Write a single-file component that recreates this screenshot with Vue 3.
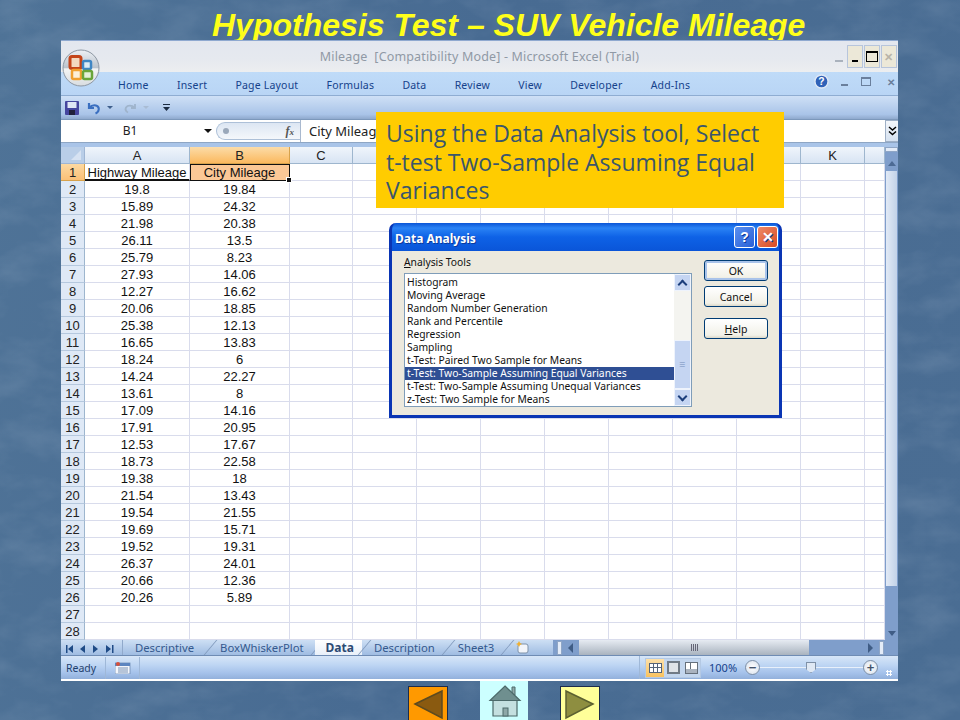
<script setup>
// D to J sit behind the yellow note on the slide, so their letters never show
const columns = ["A", "B", "C", "", "", "", "", "", "", "", "K", ""];
const ribbonTabs = ["Home", "Insert", "Page Layout", "Formulas", "Data", "Review", "View", "Developer", "Add-Ins"];
const sheetTabs = ["Descriptive", "BoxWhiskerPlot", "Data", "Description", "Sheet3"];

const mileage = [
  ["19.8", "19.84"], ["15.89", "24.32"], ["21.98", "20.38"], ["26.11", "13.5"], ["25.79", "8.23"],
  ["27.93", "14.06"], ["12.27", "16.62"], ["20.06", "18.85"], ["25.38", "12.13"], ["16.65", "13.83"],
  ["18.24", "6"], ["14.24", "22.27"], ["13.61", "8"], ["17.09", "14.16"], ["17.91", "20.95"],
  ["12.53", "17.67"], ["18.73", "22.58"], ["19.38", "18"], ["21.54", "13.43"], ["19.54", "21.55"],
  ["19.69", "15.71"], ["19.52", "19.31"], ["26.37", "24.01"], ["20.66", "12.36"], ["20.26", "5.89"],
  ["", ""], ["", ""],
];

const tools = [
  "Histogram",
  "Moving Average",
  "Random Number Generation",
  "Rank and Percentile",
  "Regression",
  "Sampling",
  "t-Test: Paired Two Sample for Means",
  "t-Test: Two-Sample Assuming Equal Variances",
  "t-Test: Two-Sample Assuming Unequal Variances",
  "z-Test: Two Sample for Means",
];
</script>

<template>
  <div class="slide">
    <svg class="texture" width="960" height="720">
      <filter id="mottle">
        <feTurbulence type="fractalNoise" baseFrequency="0.02 0.035" numOctaves="4" seed="11" />
        <feColorMatrix values="0 0 0 0 0.8  0 0 0 0 0.86  0 0 0 0 0.95  1.4 0 0 0 -0.55" />
      </filter>
      <rect width="960" height="720" filter="url(#mottle)" />
    </svg>

    <h1 class="title">Hypothesis Test – SUV Vehicle Mileage</h1>

    <div class="excel">
      <div class="titlebar">
        <span class="doc-title">Mileage&nbsp; [Compatibility Mode] - Microsoft Excel (Trial)</span>
        <svg class="office-button" width="38" height="38" viewBox="0 0 38 38">
          <defs>
            <linearGradient id="orb" x1="0" y1="0" x2="0" y2="1">
              <stop offset="0" stop-color="#eef1f5" />
              <stop offset=".5" stop-color="#b9c2cc" />
              <stop offset=".52" stop-color="#f4f5f4" />
              <stop offset="1" stop-color="#d8dce0" />
            </linearGradient>
          </defs>
          <circle cx="19" cy="19" r="18" fill="url(#orb)" stroke="#8d97a3" />
          <rect x="8" y="7.500" width="11" height="12" rx="2" fill="#f3d9c0" stroke="#c4451a" stroke-width="3" />
          <rect x="21" y="12" width="8" height="8" rx="1.500" fill="#dcebf6" stroke="#3f86c4" stroke-width="2.500" />
          <rect x="10" y="21" width="9" height="9" rx="1.500" fill="#fdf0d8" stroke="#f0a030" stroke-width="2.500" />
          <rect x="21" y="22" width="9" height="8" rx="1.500" fill="#e4f0d8" stroke="#6aa53a" stroke-width="2.500" />
        </svg>
        <div class="win-buttons">
          <span class="ghost-min"></span>
          <span class="win-btn"><i class="min-mark"></i></span>
          <span class="win-btn"><i class="max-mark"></i></span>
          <span class="win-btn close-mark">✕</span>
        </div>
      </div>

      <div class="ribbon">
        <span v-for="tab in ribbonTabs" :key="tab">{{ tab }}</span>
        <div class="ribbon-right">
          <svg class="rb-help" width="15" height="15" viewBox="0 0 16 16">
            <circle cx="8" cy="8" r="7" fill="#2f62b8" stroke="#dfe8f5" stroke-width="1.500" />
            <text x="8" y="12" text-anchor="middle" font-size="11" font-weight="700" fill="#fff" font-family="Liberation Sans">?</text>
          </svg>
          <i class="rb-min"></i>
          <i class="rb-restore"></i>
          <b>✕</b>
        </div>
      </div>

      <div class="qat">
        <svg width="14" height="14" viewBox="0 0 14 14">
          <rect width="14" height="14" rx="1" fill="#45459e" />
          <rect x="2.500" y="1" width="9" height="6" fill="#dfe6f4" />
          <rect x="4" y="9" width="6" height="5" fill="#20203a" />
        </svg>
        <svg class="undo" width="14" height="14" viewBox="0 0 14 14">
          <path d="M2 2v5h5M2.500 6.500C5 3.500 10 3.500 11.500 6.500c1 2.500-.5 5-3 6" fill="none" stroke="#3a6fc0" stroke-width="2.200" />
        </svg>
        <i class="caret"></i>
        <svg class="redo" width="14" height="14" viewBox="0 0 14 14">
          <path d="M12 3v4H8M11.500 6.500C9 4 4.500 4 3 6.500c-1 2 0 4 2 5" fill="none" stroke="#9fb4cc" stroke-width="1.800" />
        </svg>
        <i class="caret faint"></i>
        <svg class="customize" width="7" height="8" viewBox="0 0 7 8">
          <path d="M0 .5h7" stroke="#1b2b42" />
          <path d="M0 3h7L3.500 7z" fill="#1b2b42" />
        </svg>
      </div>

      <div class="formula-bar">
        <div class="name-box">B1</div>
        <i class="name-caret"></i>
        <div class="fx-pill">
          <i class="fx-dot"></i>
          <em>f<small>x</small></em>
        </div>
        <div class="formula-text">City Mileage</div>
        <div class="formula-expand">
          <svg width="9" height="10" viewBox="0 0 9 10" fill="none" stroke="#000" stroke-width="1.500">
            <path d="M1 1l3.500 3L8 1M1 5.500l3.500 3 3.500-3" />
          </svg>
        </div>
      </div>

      <div class="sheet-area">
        <div class="grid">
          <div class="corner"><i></i></div>
          <div
            v-for="(col, c) in columns"
            :key="c"
            class="col-head"
            :class="{ active: col === 'B' }"
          >{{ col }}</div>

          <div class="row-head active">1</div>
          <div class="cell head-a">Highway Mileage</div>
          <div class="cell head-b">City Mileage<i class="fill-handle"></i></div>
          <div v-for="n in 10" :key="'r1' + n" class="cell"></div>

          <template v-for="(row, i) in mileage" :key="i">
            <div class="row-head">{{ i + 2 }}</div>
            <div class="cell">{{ row[0] }}</div>
            <div class="cell">{{ row[1] }}</div>
            <div v-for="n in 10" :key="n" class="cell"></div>
          </template>
        </div>

        <div class="v-scroll">
          <i class="split-box"></i>
          <i class="arrow-up"></i>
          <div class="v-thumb"></div>
          <i class="arrow-down"></i>
        </div>
      </div>

      <div class="tabs-row">
        <div class="tab-nav">
          <svg width="52" height="10" viewBox="0 0 52 10" fill="#1f4b86">
            <path d="M1 1h1.500v8H1zM8 1v8L3 5zM20 1v8l-5-4zM28 1v8l5-4zM41 1v8l5-4zM47 1h1.500v8H47z" />
          </svg>
        </div>
        <div class="tabs">
          <span
            v-for="name in sheetTabs"
            :key="name"
            class="tab"
            :class="{ current: name === 'Data' }"
          >{{ name }}</span>
          <span class="new-sheet">
            <svg width="15" height="13" viewBox="0 0 15 13">
              <rect x="3" y="3" width="10" height="9" rx="2" fill="#f2f5fa" stroke="#7f93ab" />
              <path d="M4 0l1 2 2 1-2 1-1 2-1-2-2-1 2-1z" fill="#f0b030" />
            </svg>
          </span>
        </div>
        <div class="h-scroll">
          <i class="split-v"></i>
          <i class="arrow-left"></i>
          <div class="h-thumb"><i></i></div>
          <i class="arrow-right"></i>
          <i class="split-v"></i>
        </div>
      </div>

      <div class="statusbar">
        <span class="ready">Ready</span>
        <span class="macro">
          <svg width="16" height="12" viewBox="0 0 16 12">
            <rect y="1" width="15" height="11" fill="#f3f6fb" stroke="#6f8db5" stroke-width=".8" />
            <rect y="1" width="15" height="3" fill="#5c85c0" />
            <path d="M3 6h10M3 8h10M3 10h10" stroke="#7b93b5" />
            <circle cx="3" cy="2" r="2" fill="#d8503a" />
          </svg>
        </span>
        <div class="status-fill"></div>
        <div class="view-buttons">
          <span class="view on"><i class="v-grid"></i></span>
          <span class="view"><i class="v-page"></i></span>
          <span class="view"><i class="v-break"></i></span>
        </div>
        <span class="zoom-value">100%</span>
        <span class="zoom-btn">−</span>
        <div class="zoom-track"><i></i></div>
        <span class="zoom-btn">+</span>
        <span class="grip"></span>
      </div>
    </div>

    <div class="callout">Using the Data Analysis tool, Select t-test Two-Sample Assuming Equal Variances</div>

    <div class="dialog">
      <div class="dialog-title">
        <span>Data Analysis</span>
        <div class="dialog-btns">
          <span class="help-btn">?</span>
          <span class="close-btn">✕</span>
        </div>
      </div>
      <div class="dialog-body">
        <div class="tools-pane">
          <div class="tools-label"><u>A</u>nalysis Tools</div>
          <div class="listbox">
            <div class="list-items">
              <div
                v-for="tool in tools"
                :key="tool"
                class="list-item"
                :class="{ selected: tool.includes('Assuming Equal') }"
              >{{ tool }}</div>
            </div>
            <div class="list-scroll">
              <span class="sb-btn"><i class="chev-up"></i></span>
              <div class="sb-space"></div>
              <div class="sb-thumb">≡</div>
              <span class="sb-btn"><i class="chev-down"></i></span>
            </div>
          </div>
        </div>
        <div class="dialog-actions">
          <button class="default">OK</button>
          <button>Cancel</button>
          <button class="help"><u>H</u>elp</button>
        </div>
      </div>
    </div>

    <div class="nav-row">
      <div class="nav-btn prev">
        <svg width="38" height="35" viewBox="0 0 38 35">
          <path d="M6 17 33 4v27z" fill="#8a5a10" stroke="#5c4a20" stroke-width="1.500" />
        </svg>
      </div>
      <div class="nav-btn home">
        <svg width="46" height="39" viewBox="0 0 46 39">
          <path d="M12 19h24v16H12z" fill="#c4e0e0" stroke="#4c6a6a" stroke-width="1.200" />
          <path d="M31 6h3v8h-3z" fill="#8ea8a8" stroke="#4c6a6a" />
          <path d="M24 5 39 19.500H9z" fill="#6f8f8f" stroke="#4c6a6a" stroke-width="1.200" />
          <rect x="22" y="27" width="5" height="8" fill="#8ea8a8" stroke="#4c6a6a" />
        </svg>
      </div>
      <div class="nav-btn next">
        <svg width="38" height="35" viewBox="0 0 38 35">
          <path d="M32 17 5 4v27z" fill="#8e8e40" stroke="#5c6030" stroke-width="1.500" />
        </svg>
      </div>
    </div>
  </div>
</template>

<style>
html,
body {
  margin: 0;
  background: #4a6c92;
}
</style>

<style scoped>
.slide {
  position: relative;
  width: 960px;
  height: 720px;
  overflow: hidden;
  background: linear-gradient(100deg, #4f7397 0%, #486b92 45%, #4a6d93 100%);
  font-family: "Noto Sans", sans-serif;
}

.texture {
  position: absolute;
  left: 0;
  top: 0;
  opacity: 0.14;
}

.title {
  position: relative;
  margin: 0;
  height: 40px;
  padding-left: 212px;
  font: italic bold 32px/50px "Liberation Sans", sans-serif;
  color: #ffff1a;
  white-space: nowrap;
}

/* excel window */
.excel {
  position: relative;
  width: 837px;
  height: 641px;
  margin-left: 61px;
  background: #fff;
  display: flex;
  flex-direction: column;
  font-size: 10.500px;
  border-top: 1px solid #8fa9d0;
  box-sizing: border-box;
}

.titlebar {
  height: 31px;
  flex: none;
  background: linear-gradient(#e3e7ef, #e6e9ef 60%, #eceef0);
  position: relative;
  text-align: center;
  color: #9099a5;
  font-size: 12.500px;
  letter-spacing: 0.16px;
  line-height: 31px;
}

.office-button {
  position: absolute;
  left: 1px;
  top: 8px;
  z-index: 1;
}

.win-buttons {
  position: absolute;
  right: 1px;
  top: 4px;
  display: flex;
  height: 23px;
}

.ghost-min {
  width: 8px;
  height: 1.500px;
  margin: 15px 3px 0 0;
  background: #aab2bd;
}

.win-btn {
  width: 16px;
  margin-left: 1px;
  background: #ece8d8;
  border: 1px solid #b7c5dc;
  box-sizing: border-box;
  display: flex;
  align-items: center;
  justify-content: center;
  font-size: 11px;
}

.min-mark {
  width: 6px;
  height: 2px;
  background: #000;
  margin-top: 9px;
}

.max-mark {
  width: 10px;
  height: 8px;
  border: 1px solid #000;
  border-top-width: 2px;
}

.close-mark {
  color: #b8b4a8;
  font-weight: 700;
}

.ribbon {
  height: 24px;
  flex: none;
  background: linear-gradient(#bfdbf8, #b9d5f5);
  border-bottom: 1px solid #8fadd2;
  box-sizing: border-box;
  display: flex;
  align-items: center;
  padding: 2px 0 0 57px;
  gap: 28.200px;
  color: #15428b;
  font-size: 10.500px;
  letter-spacing: 0.2px;
  position: relative;
}

.ribbon-right {
  position: absolute;
  right: 3px;
  top: 2px;
  display: flex;
  align-items: center;
  gap: 13px;
}

.ribbon-right b {
  color: #6a7f9c;
  font-size: 10px;
}

.rb-help {
  margin-right: -1px;
}

.rb-min {
  width: 7px;
  height: 2px;
  margin-top: 6px;
  background: #6a7f9c;
}

.rb-restore {
  width: 8px;
  height: 6px;
  margin-right: 3px;
  border: 1px solid #6a7f9c;
  border-top-width: 2px;
}

.qat {
  height: 24px;
  flex: none;
  background: linear-gradient(#cfe0f6, #a9c4e8 80%, #8fa9cd);
  display: flex;
  align-items: center;
  padding-left: 4px;
  border-bottom: 1px solid #7c98bb;
  box-sizing: border-box;
}

.undo {
  margin-left: 8px;
}

.redo {
  margin-left: 10px;
}

.caret {
  width: 0;
  height: 0;
  margin-left: 6px;
  border: 3px solid transparent;
  border-top: 3px solid #3f5f8c;
  border-bottom: 0;
}

.caret.faint {
  border-top-color: #a9bcd4;
}

.customize {
  margin-left: 14px;
}

.formula-bar {
  height: 23px;
  flex: none;
  background: #fff;
  display: flex;
  align-items: stretch;
  border-bottom: 1px solid #8ea6c4;
  box-sizing: border-box;
  position: relative;
  font-size: 13px;
  color: #222;
}

.name-box {
  width: 138px;
  flex: none;
  text-align: center;
  line-height: 22px;
  font-size: 12px;
}

.name-caret {
  align-self: center;
  width: 0;
  height: 0;
  margin-left: 5px;
  border: 4px solid transparent;
  border-top: 4px solid #111;
  border-bottom: 0;
}

.fx-pill {
  width: 84px;
  flex: none;
  margin: 2px 0 2px 4px;
  border: 1px solid #adc0d8;
  border-right: 0;
  border-radius: 10px 0 0 10px;
  background: linear-gradient(#dce6f3, #f4f7fb);
  display: flex;
  align-items: center;
  justify-content: space-between;
  padding: 0 6px;
  box-sizing: border-box;
}

.fx-dot {
  width: 6px;
  height: 6px;
  border-radius: 50%;
  background: #9aa8ba;
}

.fx-pill em {
  font: italic bold 12px "Liberation Serif", serif;
  color: #555;
}

.fx-pill small {
  font-size: 9px;
}

.formula-text {
  flex: 1;
  border-left: 1px solid #a9b9cf;
  padding-left: 8px;
  line-height: 22px;
  white-space: nowrap;
  overflow: hidden;
}

.formula-expand {
  width: 12px;
  flex: none;
  border: 1px solid #9fb0c6;
  border-right: 0;
  display: flex;
  align-items: center;
  justify-content: center;
  background: linear-gradient(#f4f7fb, #d5e1f0);
}

.sheet-area {
  flex: none;
  height: 497px;
  display: flex;
  background: #a9c4e8;
  padding-top: 4px;
  box-sizing: border-box;
}

.grid {
  display: grid;
  grid-template-columns: 24px 105px 100px 63px repeat(8, 64px) 20px;
  grid-auto-rows: 17px;
  width: 824px;
  flex: none;
  background: #fff;
  font: 13px/17px "Liberation Sans", sans-serif;
  color: #111;
}

.corner {
  background: #b9cee8;
  border-right: 1px solid #9fb6d4;
  border-bottom: 1px solid #9fb6d4;
  box-sizing: border-box;
  position: relative;
}

.corner i {
  position: absolute;
  right: 3px;
  bottom: 3px;
  border: 5px solid transparent;
  border-right-color: #d6e2f2;
  border-bottom-color: #d6e2f2;
}

.col-head {
  background: linear-gradient(#f0f5fb, #d8e4f3);
  border-right: 1px solid #9eb6ce;
  border-bottom: 1px solid #9eb6ce;
  box-sizing: border-box;
  text-align: center;
  color: #222;
}

.col-head.active {
  background: linear-gradient(#fcdca8, #fbb95f);
  border-color: #d7a24c;
}

.row-head {
  background: #dfe9f6;
  border-right: 1px solid #9eb6ce;
  border-bottom: 1px solid #b5c8de;
  box-sizing: border-box;
  text-align: center;
  color: #222;
}

.row-head.active {
  background: linear-gradient(#fcd9a2, #fbc077);
  border-color: #d7a24c;
}

.cell {
  border-right: 1px solid #d9dcec;
  border-bottom: 1px solid #d9dcec;
  box-sizing: border-box;
  text-align: center;
  white-space: nowrap;
  overflow: hidden;
}

.head-a {
  border-bottom: 2px solid #111;
}

.head-b {
  position: relative;
  overflow: visible;
  background: #fbc896;
  border-color: #111;
  box-shadow: inset 1px 1px 0 #111;
}

.fill-handle {
  position: absolute;
  right: -3px;
  bottom: -3px;
  width: 4px;
  height: 4px;
  background: #111;
  border: 1px solid #fff;
}

.v-scroll {
  flex: 1;
  display: flex;
  flex-direction: column;
  align-items: center;
  background: #7f9ecb;
}

.split-box {
  width: 11px;
  height: 3px;
  background: #e4ecf8;
  border: 1px solid #8fa6c6;
}

.arrow-up {
  margin-top: 9px;
  border: 4px solid transparent;
  border-bottom: 5px solid #4c6a94;
  border-top: 0;
}

.v-thumb {
  width: 11px;
  height: 415px;
  margin-top: 5px;
  background: linear-gradient(90deg, #e2eaf6, #c2d2e8);
}

.arrow-down {
  margin-top: auto;
  margin-bottom: 4px;
  border: 4px solid transparent;
  border-top: 5px solid #3f5c85;
  border-bottom: 0;
}

.tabs-row {
  height: 16px;
  flex: none;
  display: flex;
  background: linear-gradient(#cddff4, #9fbce2);
  border-bottom: 1px solid #6f8cb4;
  box-sizing: border-box;
  font-size: 11.300px;
  line-height: 16px;
}

.tab-nav {
  width: 61px;
  flex: none;
  padding: 2px 0 0 4px;
  box-sizing: border-box;
}

.tabs {
  width: 431px;
  flex: none;
  display: flex;
  border-left: 1px solid #90a9cb;
  box-sizing: border-box;
}

.tab {
  position: relative;
  height: 15px;
  padding: 0 11px 0 12px;
  white-space: nowrap;
  color: #34598e;
}

.tab::after {
  content: "";
  position: absolute;
  right: -3px;
  top: 0;
  bottom: 0;
  border-right: 1px solid #7f98bb;
  transform: skewX(-40deg);
}

.tab:first-child {
  padding-right: 14px;
}

.tab.current {
  padding: 0 8px 0 11px;
  background: linear-gradient(#ffffff, #e9f0f9);
  color: #2d4a73;
  font-weight: 700;
  font-size: 12px;
}

.new-sheet {
  padding: 1px 0 0 10px;
}

.h-scroll {
  flex: 1;
  display: flex;
  align-items: center;
  background: #7f9ecb;
  padding: 0 14px 0 4px;
}

.split-v {
  width: 3px;
  height: 12px;
  background: #e4ecf8;
  border: 1px solid #8fa6c6;
  flex: none;
}

.arrow-left {
  flex: none;
  margin: 0 6px;
  border: 5px solid transparent;
  border-right: 5px solid #3f5c85;
  border-left: 0;
}

.arrow-right {
  flex: none;
  margin: 0 6px 0 auto;
  border: 5px solid transparent;
  border-left: 5px solid #3f5c85;
  border-right: 0;
}

.h-thumb {
  width: 230px;
  height: 15px;
  display: flex;
  align-items: center;
  justify-content: center;
  background: linear-gradient(#e6ebf2, #a9b3bf);
}

.h-thumb i {
  width: 7px;
  height: 7px;
  background: repeating-linear-gradient(90deg, #667 0 1px, transparent 1px 2px);
}

.statusbar {
  flex: none;
  height: 25px;
  box-sizing: border-box;
  display: flex;
  align-items: center;
  background: linear-gradient(#d7e6f8, #bdd5f3 40%, #a4c1ea 75%, #92b0db);
  color: #1f3f6e;
  font-size: 10.500px;
  border-bottom: 2px solid #fff;
}

.ready {
  width: 45px;
  flex: none;
  padding-left: 5px;
  box-sizing: border-box;
  border-right: 1px solid #9fb8d8;
  line-height: 22px;
}

.macro {
  width: 34px;
  height: 22px;
  flex: none;
  box-sizing: border-box;
  display: flex;
  align-items: center;
  justify-content: center;
  border-right: 1px solid #9fb8d8;
}

.status-fill {
  width: 500px;
  height: 23px;
  flex: none;
  border-right: 1px solid #9fb8d8;
  box-sizing: border-box;
}

.view-buttons {
  display: flex;
  flex: none;
  margin-left: 5px;
  height: 18px;
  border: 1px solid #b4c9e4;
  background: #c3d6ee;
}

.view {
  width: 18px;
  display: flex;
  align-items: center;
  justify-content: center;
}

.view.on {
  background: linear-gradient(#fde0a8, #f9c25f);
}

.v-grid {
  width: 11px;
  height: 8px;
  border: 1px solid #55647a;
  background:
    linear-gradient(90deg, transparent 3px, #55647a 3px, #55647a 4px, transparent 4px, transparent 7px, #55647a 7px, #55647a 8px, transparent 8px),
    linear-gradient(transparent 3px, #55647a 3px, #55647a 4px, transparent 4px),
    #fff;
}

.v-page {
  width: 9px;
  height: 9px;
  border: 2px solid #707a86;
  background: #dfe3e8;
}

.v-break {
  width: 11px;
  height: 10px;
  border: 1px solid #66707c;
  background:
    linear-gradient(90deg, #fff 4px, #66707c 4px, #66707c 5px, #fff 5px) 0 0 / 100% 6px no-repeat,
    #aab3bf;
}

.zoom-value {
  margin-left: 8px;
  flex: none;
  font-size: 11px;
  color: #15428b;
}

.zoom-btn {
  width: 15px;
  height: 15px;
  margin-left: 8px;
  flex: none;
  box-sizing: border-box;
  border: 1px solid #7d8fa6;
  border-radius: 50%;
  background: radial-gradient(#fff, #d5dfeb);
  text-align: center;
  font: bold 13px/13px "Liberation Sans", sans-serif;
  color: #44536a;
}

.zoom-track {
  width: 103px;
  height: 1px;
  flex: none;
  background: #e8f0fa;
  position: relative;
}

.zoom-track + .zoom-btn {
  margin-left: 0;
}

.zoom-track i {
  position: absolute;
  left: 46px;
  top: -5px;
  width: 8px;
  height: 9px;
  background: #dfe8f4;
  border: 1px solid #7d8fa6;
  clip-path: polygon(0 0, 100% 0, 100% 65%, 50% 100%, 0 65%);
}

.grip {
  width: 6px;
  height: 6px;
  flex: none;
  margin: 10px 0 0 8px;
  background: radial-gradient(circle, #fff 1px, transparent 1.300px) 0 0 / 3px 3px;
}

/* slide annotation */
.callout {
  position: absolute;
  left: 376px;
  top: 112px;
  width: 408px;
  height: 96px;
  box-sizing: border-box;
  padding: 7px 22px 0 10px;
  background: #ffcc00;
  color: #3a566c;
  font: 23px/28.500px "Open Sans", sans-serif;
}

/* data analysis dialog */
.dialog {
  position: absolute;
  left: 389px;
  top: 223px;
  width: 393px;
  height: 195px;
  box-sizing: border-box;
  display: flex;
  flex-direction: column;
  background: #0a5ae0;
  border: 3px solid #0a35b4;
  border-top: 0;
  border-radius: 7px 7px 0 0;
  font: 10.300px/13px "Noto Sans", sans-serif;
  color: #111;
}

.dialog-title {
  height: 28px;
  flex: none;
  display: flex;
  align-items: center;
  justify-content: space-between;
  padding: 0 1px 0 3px;
  border-radius: 7px 7px 0 0;
  background: linear-gradient(#0a55d6, #2a83f5 18%, #0e62e6 50%, #0a55d8);
  color: #fff;
  font: bold 12px "Noto Sans", sans-serif;
  text-shadow: 1px 1px 0 #0a3a9c;
}

.dialog-title > span {
  padding-top: 3px;
}

.dialog-btns {
  display: flex;
  gap: 2px;
}

.help-btn,
.close-btn {
  width: 19px;
  height: 20px;
  border: 1px solid #fff;
  border-radius: 3px;
  text-align: center;
  font: bold 14px/20px "Liberation Sans", sans-serif;
  color: #fff;
}

.help-btn {
  background: linear-gradient(135deg, #5a90f0, #2a5fd6);
}

.close-btn {
  background: linear-gradient(135deg, #ee8a6a, #d84a22);
}

.dialog-body {
  flex: 1;
  display: flex;
  background: #ece9de;
  padding: 5px 12px 8px;
}

.tools-pane {
  width: 288px;
  flex: none;
}

.tools-label {
  height: 13px;
}

.listbox {
  margin-top: 4px;
  width: 288px;
  height: 134px;
  box-sizing: border-box;
  display: flex;
  background: #fff;
  border: 1px solid #7f9db9;
}

.list-items {
  flex: 1;
  padding-top: 2px;
}

.list-item {
  height: 13px;
  padding-left: 2px;
  white-space: nowrap;
}

.list-item.selected {
  background: #2f4f94;
  color: #fff;
}

.list-scroll {
  width: 17px;
  flex: none;
  display: flex;
  flex-direction: column;
  background: #f4f4f0;
}

.sb-btn {
  height: 17px;
  flex: none;
  background: #c5d5f2;
  border: 1px solid #eef3fc;
  box-sizing: border-box;
  display: flex;
  align-items: center;
  justify-content: center;
}

.chev-up,
.chev-down {
  width: 5px;
  height: 5px;
  border-left: 2px solid #1c3f7c;
  border-top: 2px solid #1c3f7c;
  transform: rotate(45deg);
  margin-top: 3px;
}

.chev-down {
  transform: rotate(225deg);
  margin-top: -3px;
}

.sb-space {
  flex: 1;
}

.sb-thumb {
  height: 49px;
  flex: none;
  background: #c5d5f2;
  border: 1px solid #eef3fc;
  box-sizing: border-box;
  text-align: center;
  line-height: 47px;
  color: #8fa5cc;
}

.dialog-actions {
  margin-left: 12px;
  padding-top: 4px;
  display: flex;
  flex-direction: column;
}

.dialog-actions button {
  width: 64px;
  height: 21px;
  margin-bottom: 5px;
  padding: 0;
  border: 1px solid #003c74;
  border-radius: 3px;
  background: linear-gradient(#fff, #f2f1e8 85%, #dcd8c8);
  font: 10.500px "Noto Sans", sans-serif;
  color: #111;
}

.dialog-actions button.default {
  box-shadow: inset 0 0 0 2px #a9c3ea;
}

.dialog-actions button.help {
  margin-top: 6px;
}

/* slide navigation */
.nav-row {
  position: relative;
  display: flex;
  align-items: flex-start;
  margin-left: 408px;
}

.nav-btn {
  flex: none;
  box-sizing: border-box;
  display: flex;
  justify-content: center;
}

.prev,
.next {
  width: 40px;
  height: 40px;
  margin-top: 5px;
  border: 1px solid #1c2c4c;
}

.prev {
  background: #ff9900;
}

.home {
  width: 48px;
  height: 40px;
  margin: 0 32px;
  background: #ccffff;
}

.next {
  background: #ffff99;
}
</style>
